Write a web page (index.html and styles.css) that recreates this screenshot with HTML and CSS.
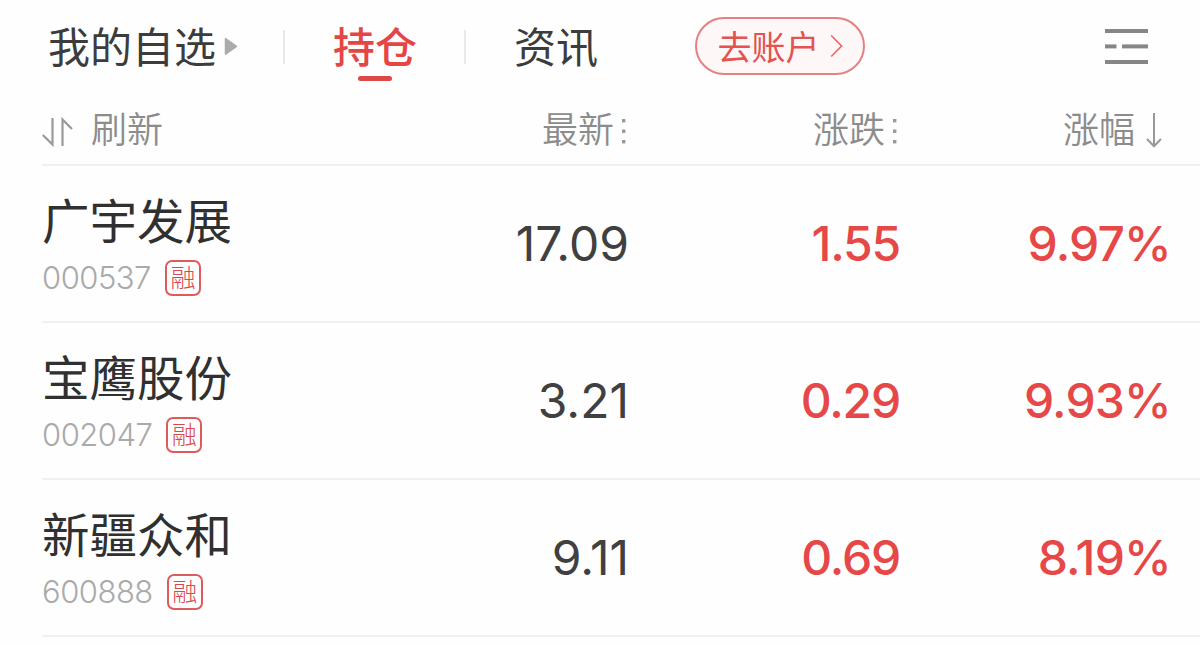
FILE: index.html
```
<!DOCTYPE html>
<html lang="zh-CN">
	<head>
		<meta charset="utf-8">
		<title>持仓</title>
		<link rel="stylesheet" href="styles.css">
	</head>
	<body>
		<div class="topbar">
			<a class="tab tab-mine">我的自选</a>
			<svg class="caret" width="14" height="19" viewBox="0 0 14 19"><path d="M1.5 1.5L12.5 9.3L1.5 17.1Z" fill="#aaa" stroke="#aaa" stroke-width="1.5" stroke-linejoin="round"/></svg>
			<span class="sep"></span>
			<a class="tab tab-hold active">持仓</a>
			<span class="sep"></span>
			<a class="tab tab-news">资讯</a>
			<a class="account">
				<span>去账户</span>
				<svg width="13" height="24" viewBox="0 0 13 24"><path d="M1.2 1.5L11.6 12L1.2 22.5" fill="none" stroke="#e9696c" stroke-width="1.7"/></svg>
			</a>
			<svg class="menu" width="43" height="36" viewBox="0 0 43 36" fill="#868686">
				<rect x="0" y="0" width="43" height="4"/>
				<rect x="0" y="15.4" width="11.5" height="4"/>
				<rect x="17" y="15.4" width="26" height="4"/>
				<rect x="0" y="31" width="43" height="4"/>
			</svg>
		</div>

		<div class="list">
			<div class="row head">
				<div class="refresh">
					<svg width="31" height="30" viewBox="0 0 31 30" fill="none" stroke="#999" stroke-width="2.2"><path d="M.8 18L10.5 27.5V1M20.5 29V2.5L30 12"/></svg>
					<span>刷新</span>
				</div>
				<div class="col">最新<svg class="dots" width="4" height="26" viewBox="0 0 4 26" fill="#999"><rect y="1" width="3.4" height="3.4"/><rect y="11.5" width="3.4" height="3.4"/><rect y="22" width="3.4" height="3.4"/></svg></div>
				<div class="col">涨跌<svg class="dots" width="4" height="26" viewBox="0 0 4 26" fill="#999"><rect y="1" width="3.4" height="3.4"/><rect y="11.5" width="3.4" height="3.4"/><rect y="22" width="3.4" height="3.4"/></svg></div>
				<div class="col">涨幅<svg class="down" width="16" height="35" viewBox="0 0 16 35" fill="none" stroke="#999" stroke-width="2"><path d="M8 0V33M1 26L8 33.2L15 26"/></svg></div>
			</div>

			<div class="row">
				<div class="stock">
					<div class="name">广宇发展</div>
					<div class="code">000537<span class="badge">融</span></div>
				</div>
				<div class="num">17.09</div>
				<div class="num up">1.55</div>
				<div class="num up rate">9.97%</div>
			</div>

			<div class="row">
				<div class="stock">
					<div class="name">宝鹰股份</div>
					<div class="code">002047<span class="badge">融</span></div>
				</div>
				<div class="num">3.21</div>
				<div class="num up">0.29</div>
				<div class="num up rate">9.93%</div>
			</div>

			<div class="row">
				<div class="stock">
					<div class="name">新疆众和</div>
					<div class="code">600888<span class="badge">融</span></div>
				</div>
				<div class="num">9.11</div>
				<div class="num up">0.69</div>
				<div class="num up rate">8.19%</div>
			</div>
		</div>
	</body>
</html>
```
FILE: styles.css
```
* {
	box-sizing: border-box;
}
body {
	margin: 0;
	background: #fefefe;
	color: #333;
	font-family: Inter, "Noto Sans CJK SC", sans-serif;
	overflow: hidden;
}
svg {
	display: block;
	flex: none;
}

.topbar {
	display: flex;
	align-items: center;
	height: 93px;
	padding: 0 52px 0 48px;
}
.tab {
	font-size: 42px;
	line-height: 96px;
	padding-top: 2px;
	white-space: nowrap;
	color: #3c3c3c;
}
.tab-mine {
	width: 168px;
}
.caret {
	margin-left: 8px;
	margin-right: 45px;
}
.sep {
	width: 2px;
	height: 34px;
	background: #e9e9e9;
}
.tab-hold {
	width: 84px;
	margin: 0 47px 0 48px;
}
.tab-news {
	width: 84px;
	margin-left: 48px;
}
.active {
	position: relative;
	color: #e64545;
	font-weight: 500;
}
.active::after {
	content: "";
	position: absolute;
	left: 25px;
	top: 78px;
	width: 34px;
	height: 5px;
	border-radius: 3px;
	background: #db4a47;
}
.account {
	display: flex;
	align-items: center;
	justify-content: center;
	gap: 10px;
	width: 170px;
	height: 58px;
	margin-left: 97px;
	margin-bottom: 2px;
	border: 2px solid #e58184;
	border-radius: 29px;
	background: #fef7f7;
	color: #e35351;
	font-size: 34px;
	line-height: 58px;
	white-space: nowrap;
}
.account span {
	padding-top: 4px;
}
.menu {
	margin-left: auto;
}

.list {
	margin-left: 42px;
}
.row {
	display: grid;
	grid-template-columns: 317px 270px 271px 268px;
	align-items: center;
	height: 157px;
	border-bottom: 2px solid #f0f0f0;
}
.head {
	height: 73px;
	color: #8c8c8c;
	font-size: 36px;
	font-weight: 350;
	line-height: 75px;
}
.refresh, .col {
	display: flex;
	align-items: center;
}
.refresh {
	gap: 18px;
}
.refresh svg {
	margin-top: 3px;
}
.col {
	justify-content: flex-end;
}
.dots {
	margin: 0 3px 0 8px;
}
.down {
	margin: 0 6px 0 11px;
}

.name {
	font-size: 47.5px;
	line-height: 60px;
	color: #303030;
}
.code {
	display: flex;
	align-items: center;
	height: 36px;
	margin-top: 8px;
	color: #aaa;
	font-size: 31px;
	font-weight: 300;
	letter-spacing: -0.5px;
}
.badge {
	width: 36px;
	height: 36px;
	margin-left: 14px;
	border: 2px solid #e05a5c;
	border-radius: 7px;
	color: #d9494b;
	font-size: 25px;
	line-height: 32px;
	text-align: center;
	letter-spacing: 0;
}
.num {
	text-align: right;
	font-size: 48px;
	color: #404040;
}
.up {
	color: #e64848;
	font-weight: 500;
	letter-spacing: -1.2px;
}
.rate {
	margin-right: -3px;
	letter-spacing: -0.8px;
}
```
